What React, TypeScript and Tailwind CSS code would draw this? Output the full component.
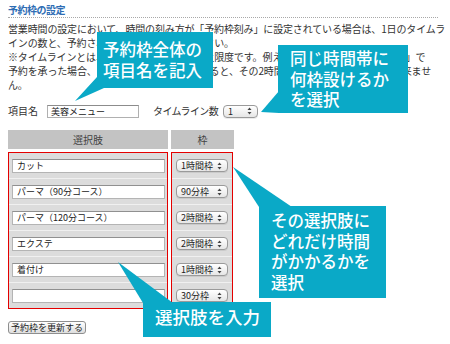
import React from "react";

const rows = [
  { name: "カット", frame: "1時間枠" },
  { name: "パーマ（90分コース）", frame: "90分枠" },
  { name: "パーマ（120分コース）", frame: "2時間枠" },
  { name: "エクステ", frame: "2時間枠" },
  { name: "着付け", frame: "1時間枠" },
  { name: "", frame: "30分枠" },
];

function Arrows() {
  return (
    <svg width="5" height="8" viewBox="0 0 5 8" className="shrink-0">
      <polygon points="2.5,0.5 4.5,3 0.5,3" fill="#444" />
      <polygon points="0.5,5 4.5,5 2.5,7.5" fill="#444" />
    </svg>
  );
}

function Select({ label, w }: { label: string; w: string }) {
  return (
    <div
      className={`${w} h-[13px] flex items-center justify-between pl-[4px] pr-[5px] rounded-[4px] border border-[#9a9a9a] bg-gradient-to-b from-white to-[#e6e6e6] text-[9px] leading-none text-[#222] shadow-[0_1px_0_rgba(0,0,0,0.08)]`}
    >
      <span>{label}</span>
      <Arrows />
    </div>
  );
}

export default function App() {
  return (
    <div className="relative w-[450px] h-[344px] overflow-hidden bg-white text-[#333] font-['Noto_Sans_CJK_JP','Noto_Sans_CJK_SC',sans-serif]">
      <div className="pl-[8px] pt-[3px]">
        <div className="w-[430px] border-b border-dotted border-[#a8a8a8] text-[10px] leading-[14px] font-bold tracking-[-0.5px] text-[#2e6db4]">
          予約枠の設定
        </div>
        <div className="mt-[4px] text-[10px] leading-[14px] tracking-[-0.15px] whitespace-nowrap">
          <div>営業時間の設定において、時間の刻み方が「予約枠刻み」に設定されている場合は、1日のタイムラ</div>
          <div>インの数と、予約される選択肢を設定して下さい。</div>
          <div>※タイムラインとは、同じ時間帯の予約数の上限度です。例えば、ある選択肢を「2時間枠」で</div>
          <div>予約を承った場合、タイムライン数が1つであると、その2時間帯に他の予約を受け付け出来ませ</div>
          <div>ん。</div>
        </div>

        <div className="mt-[12px] h-[14px] flex items-center text-[10px] leading-none">
          <span className="w-[39px]">項目名</span>
          <div className="w-[92px] h-[13px] flex items-center pl-[3px] bg-white border border-[#b0b0b0] border-t-[#8c8c8c] text-[9px] text-[#222]">
            美容メニュー
          </div>
          <span className="ml-[14px] tracking-[-0.6px]">タイムライン数</span>
          <div className="ml-[5px]">
            <Select label="1" w="w-[35px]" />
          </div>
        </div>

        <div className="mt-[12px] flex gap-[3px] text-[10px]">
          <div className="w-[160px] h-[19px] flex items-center justify-center bg-[#c3c3c3] text-[#444]">
            選択肢
          </div>
          <div className="w-[63px] h-[19px] flex items-center justify-center bg-[#c3c3c3] text-[#444]">
            枠
          </div>
        </div>
        <div className="mt-[3px] flex gap-[3px] h-[157px]">
          <div className="w-[160px] flex flex-col border border-[#e40000] bg-[#dcdcdc]">
            {rows.map((r, i) => (
              <div
                key={i}
                className={`flex-1 flex items-center pl-[3px] ${i > 0 ? "border-t border-[#f0f0f0]" : ""}`}
              >
                <div className="w-[153px] h-[14px] flex items-center pl-[4px] bg-white border border-[#b4b4b4] border-t-[#909090] text-[9px] leading-none text-[#222]">
                  {r.name}
                </div>
              </div>
            ))}
          </div>
          <div className="w-[62px] flex flex-col border border-[#e40000] bg-[#dcdcdc]">
            {rows.map((r, i) => (
              <div
                key={i}
                className={`flex-1 flex items-center pl-[4px] ${i > 0 ? "border-t border-[#f0f0f0]" : ""}`}
              >
                <Select label={r.frame} w="w-[52px]" />
              </div>
            ))}
          </div>
        </div>

        <div className="mt-[12px] w-[78px] h-[13px] flex items-center justify-center rounded-[3px] border border-[#8e8e8e] bg-gradient-to-b from-white to-[#dedede] text-[9px] leading-none text-[#222]">
          予約枠を更新する
        </div>
      </div>

      <svg
        className="absolute left-0 top-0 pointer-events-none"
        width="450"
        height="344"
        viewBox="0 0 450 344"
      >
        <polygon points="75,101 97,77 97,88 104,88" fill="#0aa9c7" />
        <polygon points="261,112 279,91 279,113" fill="#0aa9c7" />
        <polygon points="233,167 259,207 292,207" fill="#0aa9c7" />
        <polygon points="118,262 143,303 173,303" fill="#0aa9c7" />
      </svg>

      <div className="absolute left-[97px] top-[32px] w-[116px] h-[56px] bg-[#0aa9c7] pl-[6px] pt-[7px] text-white text-[16.5px] leading-[20.5px] font-medium whitespace-nowrap">
        <div>予約枠全体の</div>
        <div>項目名を記入</div>
      </div>

      <div className="absolute left-[278px] top-[45px] w-[130px] h-[68px] bg-[#0aa9c7] pl-[12px] pt-[3px] text-white text-[16.5px] leading-[20.5px] font-medium whitespace-nowrap">
        <div>同じ時間帯に</div>
        <div>何枠設けるか</div>
        <div>を選択</div>
      </div>

      <div className="absolute left-[259px] top-[206px] w-[127px] h-[92px] bg-[#0aa9c7] pl-[12px] pt-[4px] text-white text-[16.5px] leading-[20.7px] font-medium whitespace-nowrap">
        <div>その選択肢に</div>
        <div>どれだけ時間</div>
        <div>がかかるかを</div>
        <div>選択</div>
      </div>

      <div className="absolute left-[143px] top-[302px] w-[128px] h-[35px] bg-[#0aa9c7] pl-[12px] pt-[4px] text-white text-[17.5px] leading-[22px] font-medium whitespace-nowrap">
        選択肢を入力
      </div>
    </div>
  );
}
